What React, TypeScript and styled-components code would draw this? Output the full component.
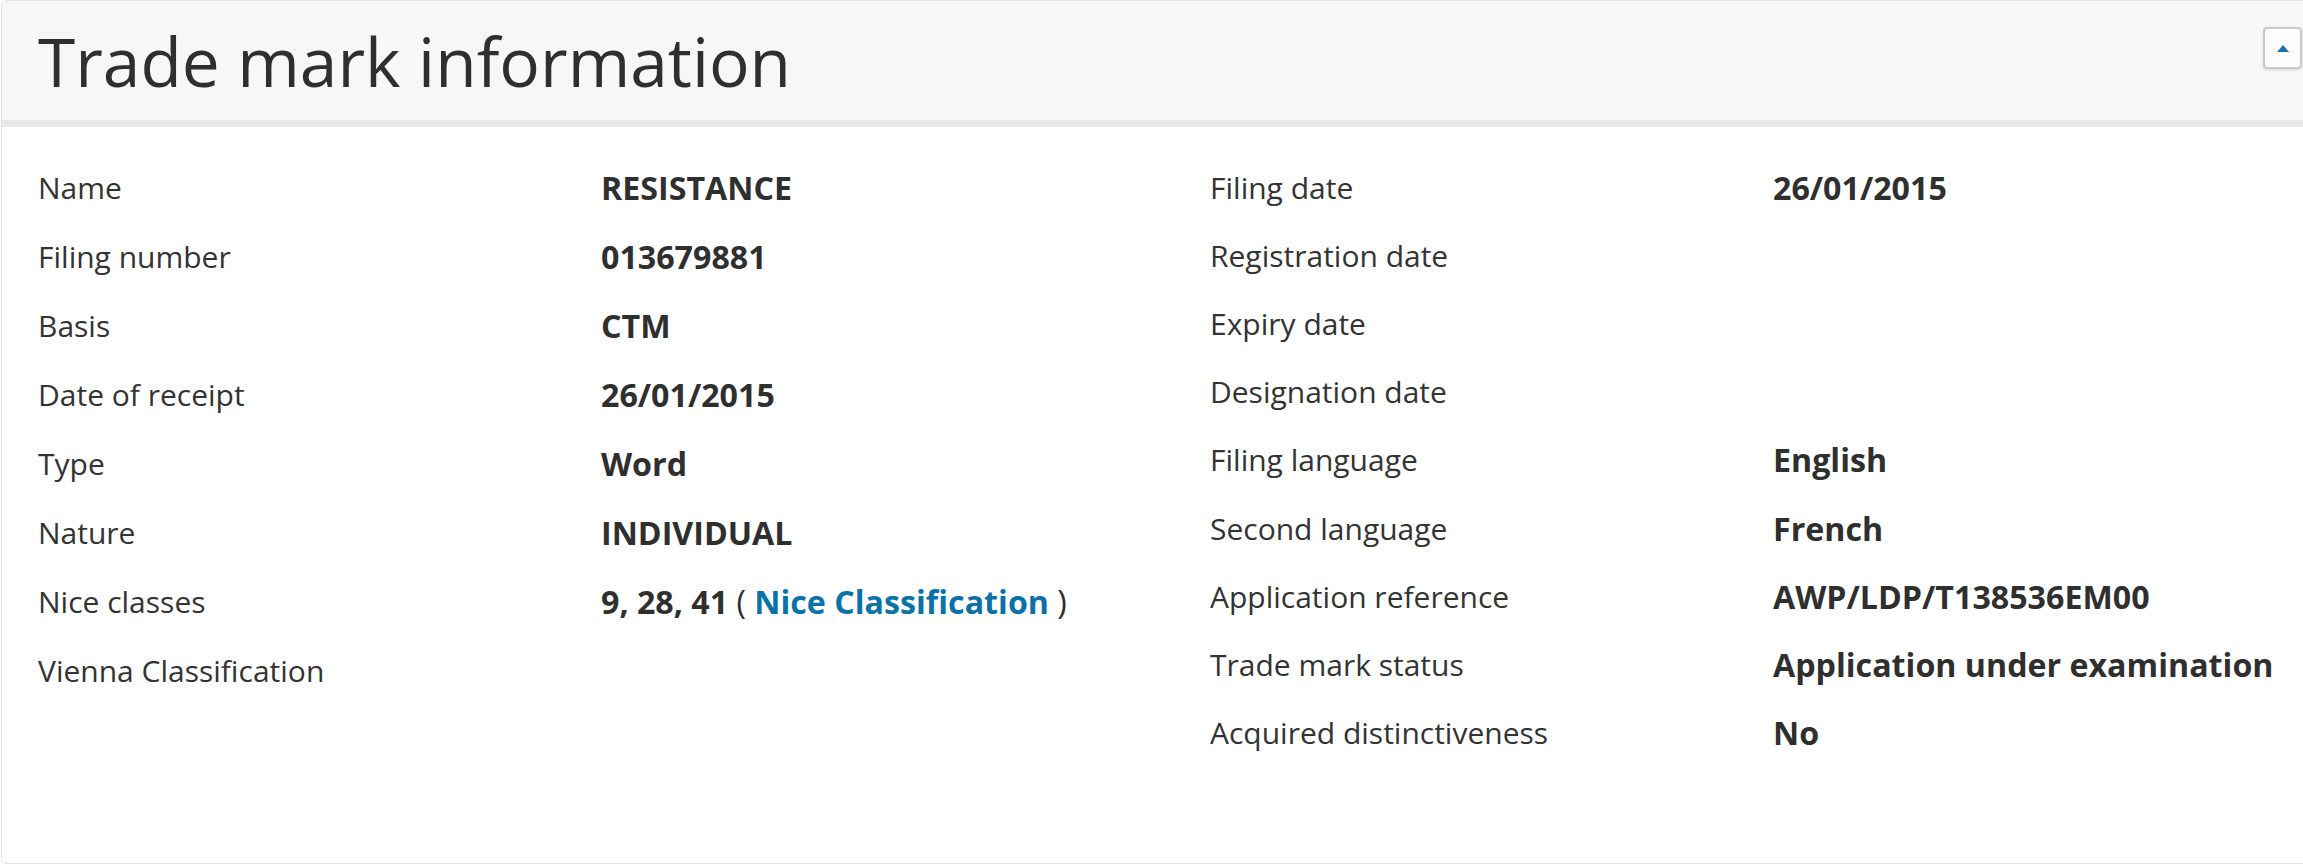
import React from 'react';
import styled, { createGlobalStyle } from 'styled-components';

const leftRows = [
  { label: 'Name', value: 'RESISTANCE' },
  { label: 'Filing number', value: '013679881' },
  { label: 'Basis', value: 'CTM' },
  { label: 'Date of receipt', value: '26/01/2015' },
  { label: 'Type', value: 'Word' },
  { label: 'Nature', value: 'INDIVIDUAL' },
  { label: 'Nice classes', value: 'nice' },
  { label: 'Vienna Classification', value: '' },
];

const rightRows = [
  { label: 'Filing date', value: '26/01/2015' },
  { label: 'Registration date', value: '' },
  { label: 'Expiry date', value: '' },
  { label: 'Designation date', value: '' },
  { label: 'Filing language', value: 'English' },
  { label: 'Second language', value: 'French' },
  { label: 'Application reference', value: 'AWP/LDP/T138536EM00' },
  { label: 'Trade mark status', value: 'Application under examination' },
  { label: 'Acquired distinctiveness', value: 'No' },
];

const GlobalStyle = createGlobalStyle`
  html, body {
    margin: 0;
    padding: 0;
    background: #ffffff;
    overflow: hidden;
  }
  body {
    font-family: "Open Sans", "Liberation Sans", Arial, sans-serif;
    color: #333333;
  }
`;

const Page = styled.div`
  width: 2303px;
  height: 866px;
  overflow: hidden;
`;

const Panel = styled.section`
  margin-left: 1px;
  width: 2310px;
  border: 1px solid #e4e4e4;
  border-radius: 6px;
  background: #ffffff;
  overflow: hidden;
`;

const Header = styled.header`
  height: 119px;
  background: #f7f7f7;
  border-bottom: 7px solid #e8e8e8;
  padding: 0 10px 0 36px;
  display: flex;
  align-items: center;
  justify-content: space-between;
`;

const Title = styled.h1`
  margin: 0;
  font-size: 67.6px;
  font-weight: 400;
  line-height: normal;
  color: #2f2f2f;
`;

const CollapseButton = styled.button`
  align-self: flex-start;
  margin-top: 26px;
  width: 39px;
  height: 42px;
  padding: 0;
  border: 2px solid #c9c9c9;
  border-radius: 4px;
  background: #fdfdfd;
  box-shadow: 0 1px 3px rgba(0, 0, 0, 0.12);
  display: inline-flex;
  align-items: center;
  justify-content: center;
  cursor: pointer;
`;

const Body = styled.div`
  display: grid;
  grid-template-columns: 1172px 1fr;
  align-items: start;
  padding: 26px 0 0 36px;
  height: 736px;
  box-sizing: border-box;
`;

const Column = styled.div`
  display: flex;
  flex-direction: column;
`;

const Row = styled.div<{ $pad: number }>`
  display: grid;
  grid-template-columns: 563px 1fr;
  align-items: start;
  padding: ${({ $pad }) => `${$pad}px`} 0;
  font-size: 30px;
  line-height: 41px;
  height: 41px;
`;

const Label = styled.span`
  font-weight: 400;
  color: #333333;
`;

const Value = styled.span`
  font-size: 32.2px;
  line-height: 41px;
  font-weight: 700;
  color: #2f2f2f;
  white-space: nowrap;
`;

const Paren = styled.span`
  font-weight: 400;
`;

const Link = styled.a`
  color: #0b72a8;
  font-weight: 700;
  text-decoration: none;
`;

const renderValue = (value: string) => {
  if (value !== 'nice') return value;
  return (
    <>
      9, 28, 41<Paren> ( </Paren>
      <Link href="#">Nice Classification</Link>
      <Paren> )</Paren>
    </>
  );
};

const App: React.FC = () => {
  return (
    <Page>
      <GlobalStyle />
      <Panel>
        <Header>
          <Title>Trade mark information</Title>
          <CollapseButton type="button" aria-label="Collapse">
            <svg width="12" height="7" viewBox="0 0 12 7">
              <polygon points="6,0 12,7 0,7" fill="#1b6fa6" />
            </svg>
          </CollapseButton>
        </Header>

        <Body>
          <Column>
            {leftRows.map((row) => (
              <Row key={row.label} $pad={14}>
                <Label>{row.label}</Label>
                <Value>{renderValue(row.value)}</Value>
              </Row>
            ))}
          </Column>
          <Column>
            {rightRows.map((row) => (
              <Row key={row.label} $pad={13.6}>
                <Label>{row.label}</Label>
                <Value>{row.value}</Value>
              </Row>
            ))}
          </Column>
        </Body>
      </Panel>
    </Page>
  );
};

export default App;
